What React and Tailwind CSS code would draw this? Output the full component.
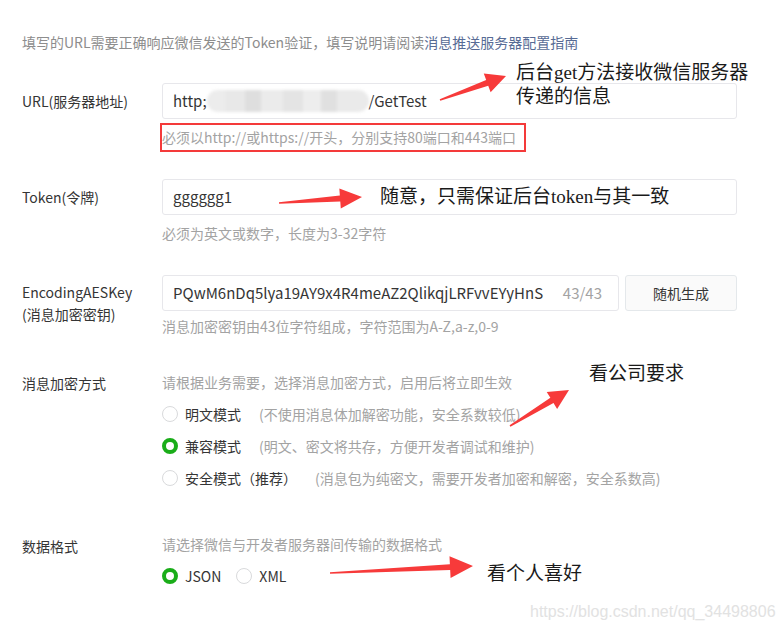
import React from "react";

const arrows = [
  { x1: 440, y1: 100, x2: 506, y2: 76, h: 20, H: 10, s: 3 },
  { x1: 279, y1: 203, x2: 362, y2: 197, h: 22, H: 10, s: 3 },
  { x1: 510, y1: 426, x2: 569, y2: 390, h: 20, H: 10, s: 3 },
  { x1: 330, y1: 573, x2: 473, y2: 566, h: 23, H: 11, s: 3 },
];

function Arrow({ x1, y1, x2, y2, h, H, s }) {
  const dx = x2 - x1;
  const dy = y2 - y1;
  const L = Math.sqrt(dx * dx + dy * dy);
  const deg = (Math.atan2(dy, dx) * 180) / Math.PI;
  const pts = [
    [0, -0.8],
    [L - h, -s],
    [L - h, -H],
    [L, 0],
    [L - h, H],
    [L - h, s],
    [0, 0.8],
  ]
    .map((p) => p.join(","))
    .join(" ");
  return (
    <polygon
      points={pts}
      fill="#f73a3a"
      transform={`translate(${x1} ${y1}) rotate(${deg})`}
    />
  );
}

function Radio({ checked }) {
  return checked ? (
    <span className="inline-block w-4 h-4 rounded-full border-[4px] border-[#1aad19] bg-white shrink-0" />
  ) : (
    <span className="inline-block w-4 h-4 rounded-full border border-[#d9dadc] bg-white shrink-0" />
  );
}

function Label({ children, className = "" }) {
  return <div className={`w-[140px] shrink-0 ${className}`}>{children}</div>;
}

export default function App() {
  return (
    <div className="relative w-[782px] h-[633px] bg-white overflow-hidden text-[14px] text-[#353535] font-['Noto_Sans_CJK_SC','Noto_Sans',sans-serif]">
      <div className="pl-[22px] pt-[32px] flex flex-col">
        <div className="leading-[20px] h-[20px] text-[#8d8d8d] whitespace-nowrap">
          填写的URL需要正确响应微信发送的Token验证，填写说明请阅读
          <span className="text-[#576b95]">消息推送服务器配置指南</span>
        </div>

        {/* URL */}
        <div className="flex mt-[31px]">
          <Label className="leading-[36px]">URL(服务器地址)</Label>
          <div className="flex flex-col">
            <div className="w-[575px] h-[36px] border border-[#e7e7eb] rounded-[3px] px-[10px] flex items-center text-[15px] text-[#353535]">
              <span>http;</span>
              <span className="inline-flex w-[162px] h-[22px] rounded-full overflow-hidden blur-[1.5px]">
                <span className="w-[18px] bg-[#ececec]" />
                <span className="w-[20px] bg-[#e8e8e8]" />
                <span className="w-[16px] bg-[#dedede]" />
                <span className="w-[22px] bg-[#ebebeb]" />
                <span className="w-[20px] bg-[#e4e4e4]" />
                <span className="w-[18px] bg-[#ededed]" />
                <span className="w-[16px] bg-[#e0e0e0]" />
                <span className="w-[32px] bg-[#eaeaea]" />
              </span>
              <span>/GetTest</span>
            </div>
            <div className="mt-[4px] -ml-[2px] w-[366px] h-[29px] border-2 border-[#f43a3a] flex items-center text-[#a3a3a3] whitespace-nowrap">
              必须以http://或https://开头，分别支持80端口和443端口
            </div>
          </div>
        </div>

        {/* Token */}
        <div className="flex mt-[27px]">
          <Label className="leading-[36px]">Token(令牌)</Label>
          <div className="flex flex-col">
            <div className="w-[575px] h-[36px] border border-[#e7e7eb] rounded-[3px] px-[10px] flex items-center text-[15px]">
              gggggg1
            </div>
            <div className="mt-[8px] leading-[20px] text-[#a3a3a3]">
              必须为英文或数字，长度为3-32字符
            </div>
          </div>
        </div>

        {/* AES */}
        <div className="flex mt-[32px]">
          <Label className="pt-[6px] leading-[22px]">
            <div>EncodingAESKey</div>
            <div>(消息加密密钥)</div>
          </Label>
          <div className="flex flex-col">
            <div className="flex gap-[6px]">
              <div className="w-[457px] h-[36px] border border-[#e7e7eb] rounded-[3px] pl-[10px] pr-[16px] flex items-center justify-between text-[15px]">
                <span>PQwM6nDq5lya19AY9x4R4meAZ2QlikqjLRFvvEYyHnS</span>
                <span className="text-[#a3a3a3]">43/43</span>
              </div>
              <div className="w-[112px] h-[36px] border border-[#e4e8eb] rounded-[3px] bg-[#fafafa] flex items-center justify-center">
                随机生成
              </div>
            </div>
            <div className="mt-[5px] leading-[20px] text-[#a3a3a3]">
              消息加密密钥由43位字符组成，字符范围为A-Z,a-z,0-9
            </div>
          </div>
        </div>

        {/* Encryption */}
        <div className="flex mt-[36px]">
          <Label className="pt-[1px] leading-[20px]">消息加密方式</Label>
          <div className="flex flex-col">
            <div className="leading-[20px] text-[#a3a3a3]">
              请根据业务需要，选择消息加密方式，启用后将立即生效
            </div>
            <div className="mt-[6px] flex flex-col">
              <div className="h-[32px] flex items-center">
                <Radio />
                <span className="ml-[7px]">明文模式</span>
                <span className="ml-[18px] text-[#a3a3a3]">(不使用消息体加解密功能，安全系数较低)</span>
              </div>
              <div className="h-[32px] flex items-center">
                <Radio checked />
                <span className="ml-[7px]">兼容模式</span>
                <span className="ml-[18px] text-[#a3a3a3]">(明文、密文将共存，方便开发者调试和维护)</span>
              </div>
              <div className="h-[32px] flex items-center">
                <Radio />
                <span className="ml-[7px]">安全模式（推荐）</span>
                <span className="ml-[18px] text-[#a3a3a3]">(消息包为纯密文，需要开发者加密和解密，安全系数高)</span>
              </div>
            </div>
          </div>
        </div>

        {/* Data format */}
        <div className="flex mt-[40px]">
          <Label className="pt-[2px] leading-[20px]">数据格式</Label>
          <div className="flex flex-col">
            <div className="leading-[20px] text-[#a3a3a3]">
              请选择微信与开发者服务器间传输的数据格式
            </div>
            <div className="mt-[6px] h-[32px] flex items-center">
              <Radio checked />
              <span className="ml-[7px] mr-[15px]">JSON</span>
              <Radio />
              <span className="ml-[7px]">XML</span>
            </div>
          </div>
        </div>
      </div>

      {/* annotation arrows */}
      <svg className="absolute inset-0 w-full h-full pointer-events-none" width="782" height="633">
        {arrows.map((a, i) => (
          <Arrow key={i} {...a} />
        ))}
      </svg>

      {/* annotation texts */}
      <div className="absolute left-[516px] top-[61px] text-[19px] leading-[24px] text-[#1a1a1a] font-['Liberation_Serif','Noto_Sans_CJK_SC',serif] whitespace-nowrap">
        <div>后台get方法接收微信服务器</div>
        <div>传递的信息</div>
      </div>
      <div className="absolute left-[380px] top-[185px] text-[19px] leading-[24px] text-[#1a1a1a] font-['Liberation_Serif','Noto_Sans_CJK_SC',serif] whitespace-nowrap">
        随意，只需保证后台token与其一致
      </div>
      <div className="absolute left-[589px] top-[362px] text-[19px] leading-[24px] text-[#1a1a1a] font-['Liberation_Serif','Noto_Sans_CJK_SC',serif] whitespace-nowrap">
        看公司要求
      </div>
      <div className="absolute left-[487px] top-[562px] text-[19px] leading-[24px] text-[#1a1a1a] font-['Liberation_Serif','Noto_Sans_CJK_SC',serif] whitespace-nowrap">
        看个人喜好
      </div>

      <div className="absolute left-[530px] top-[601px] text-[16px] leading-[22px] text-[#e2e2e2] font-['Liberation_Sans',Arial,sans-serif] whitespace-nowrap">
        https://blog.csdn.net/qq_34498806
      </div>
    </div>
  );
}
